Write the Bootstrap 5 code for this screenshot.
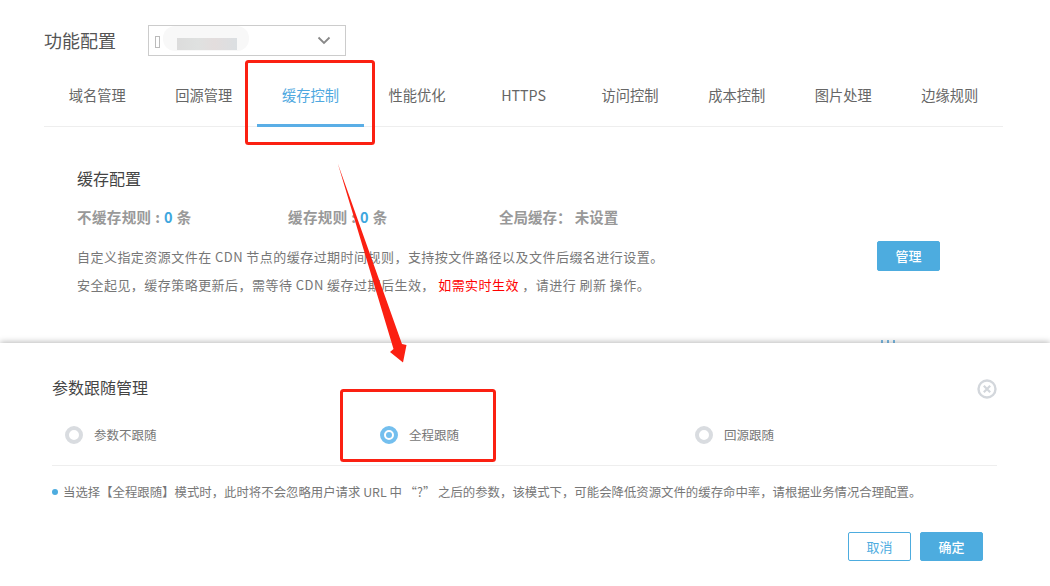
<!DOCTYPE html>
<html lang="zh-CN">
<head>
<meta charset="utf-8">
<title>功能配置</title>
<link href="https://cdn.jsdelivr.net/npm/bootstrap@5.3.0/dist/css/bootstrap.min.css" rel="stylesheet">
<style>
html,body{height:586px;overflow:hidden;background:#fff}
body{font-family:"Noto Sans CJK SC","Liberation Sans",sans-serif;color:#666;font-size:12.5px;position:relative}
.upper-pane{height:343px;padding:25px 47px 0 44px;position:relative;overflow:hidden}
.head-row{height:33px}
.page-title{font-size:18px;color:#555;line-height:31px;width:104px}
.domain-pick{width:198px;height:31px;border:1px solid #ccc;padding:0 14px 0 6px}
.fake-glyph{width:5px;height:12px;border:1px solid #bbb;display:block;margin-top:2px}
.blur-patch{width:86px;height:25px;margin:0 0 0 3px;align-self:flex-start;border-radius:12px;filter:blur(.6px);background:linear-gradient(90deg,#dcdcdc,#dfe1e0 35%,#e3dddd 62%,#dbdfe2) 14px 12px/60px 12px no-repeat,linear-gradient(#f8f8f8,#f8f8f8)}
.tab-strip{margin-top:10px;border-bottom:1px solid #eee;height:59px}
.tab-item{height:59px;line-height:54px;color:#666;font-size:14.25px;padding:0;position:relative;display:block}
.tab-item.is-on{color:#4ea8e0;border-bottom:3px solid #5aaee6}
.sect-body{padding:38px 0 0 33px;width:896px}
.sect-title{font-size:16px;color:#444;line-height:26px}
.stat-row{margin-top:14px;font-size:14.5px;font-weight:700;color:#999;line-height:24px}
.stat-cell{width:211px}
.stat-wide{letter-spacing:.4px}
.num-blue{color:#3fa7de}
.desc-line{font-size:13px;letter-spacing:.46px;color:#777;line-height:28px;white-space:nowrap}
.desc-first{margin-top:14px}
.hot-red{color:#f00}
.btn-sky{background:#4dacdf;border:1px solid #4dacdf;color:#fff;font-size:13px;width:63px;height:30px;padding:0;line-height:28px;border-radius:2px;font-weight:500}
.btn-sky:hover{background:#4dacdf;color:#fff;border-color:#4dacdf}
.btn-line{background:#fff;border:1px solid #4dacdf;color:#4dacdf;font-size:13px;width:63px;height:29px;padding:0;line-height:27px;border-radius:2px}
.btn-short{height:29px;line-height:27px}
.manage-slot{margin-top:-58px}
.peek-bits{position:absolute;left:881px;top:340px;display:flex;gap:4px}
.peek-bits i{display:block;width:2px;height:3px;background:#7cbce6}
.dialog-pane{height:243px;background:#fff;box-shadow:0 -1px 6px rgba(0,0,0,.28);position:relative;padding:30px 53px 0 52px}
.dlg-title{font-size:16px;color:#444;line-height:28px}
.close-x{width:20px;height:20px;display:block;margin-top:6px}
.radio-row{margin-top:23px;border-bottom:1px solid #eee;height:42px;--bs-gutter-x:0}
.radio-cell{padding-left:13px;height:22px;font-size:12.5px;color:#777;line-height:22px}
.radio-dot{width:18px;height:18px;border-radius:50%;border:4px solid #d9dce0;background:#fff;margin-right:11px;flex:none}
.radio-dot.is-on{border-color:#74bfee;position:relative}
.radio-dot.is-on::after{content:"";position:absolute;left:2px;top:2px;width:6px;height:6px;border-radius:50%;background:#74bfee}
.note-row{margin-top:15px;line-height:22px;font-size:12.4px;color:#777;white-space:nowrap}
.note-dot{width:6px;height:6px;border-radius:50%;background:#4dacdf;margin-right:5px;flex:none}
.foot-row{margin-top:29px;padding-right:14px;gap:9px}
.mark-layer{position:absolute;left:0;top:0;width:1050px;height:586px;pointer-events:none}
</style>
</head>
<body>
<div class="upper-pane">
  <div class="d-flex align-items-start head-row">
    <div class="page-title">功能配置</div>
    <div class="domain-pick d-flex align-items-center">
      <span class="fake-glyph"></span>
      <span class="blur-patch"></span>
      <svg class="ms-auto" width="14" height="9" viewBox="0 0 14 9"><path d="M1.5 1.5 7 7l5.5-5.5" fill="none" stroke="#888" stroke-width="1.8"/></svg>
    </div>
  </div>
  <div class="nav nav-justified tab-strip">
    <a class="nav-link tab-item">域名管理</a>
    <a class="nav-link tab-item">回源管理</a>
    <a class="nav-link tab-item is-on">缓存控制</a>
    <a class="nav-link tab-item">性能优化</a>
    <a class="nav-link tab-item">HTTPS</a>
    <a class="nav-link tab-item">访问控制</a>
    <a class="nav-link tab-item">成本控制</a>
    <a class="nav-link tab-item">图片处理</a>
    <a class="nav-link tab-item">边缘规则</a>
  </div>
  <div class="sect-body">
    <div class="sect-title">缓存配置</div>
    <div class="d-flex stat-row">
      <div class="stat-cell stat-wide">不缓存规则 : <span class="num-blue">0</span> 条</div>
      <div class="stat-cell stat-wide">缓存规则 : <span class="num-blue">0</span> 条</div>
      <div class="stat-cell">全局缓存： 未设置</div>
    </div>
    <div class="desc-line desc-first">自定义指定资源文件在 CDN 节点的缓存过期时间规则，支持按文件路径以及文件后缀名进行设置。</div>
    <div class="desc-line">安全起见，缓存策略更新后，需等待 CDN 缓存过期后生效， <span class="hot-red">如需实时生效</span> ，请进行 刷新 操作。</div>
    <div class="d-flex justify-content-end manage-slot"><button class="btn btn-sky" type="button">管理</button></div>
  </div>
  <div class="peek-bits"><i></i><i></i><i></i></div>
</div>
<div class="dialog-pane">
  <div class="d-flex justify-content-between align-items-start">
    <div class="dlg-title">参数跟随管理</div>
    <svg class="close-x" viewBox="0 0 20 20"><circle cx="10" cy="10" r="8.5" fill="none" stroke="#d3d7dc" stroke-width="2.4"/><path d="M6.8 6.8l6.4 6.4M13.2 6.8l-6.4 6.4" stroke="#d3d7dc" stroke-width="2.2"/></svg>
  </div>
  <div class="row radio-row">
    <div class="col-4"><div class="d-flex align-items-center radio-cell"><span class="radio-dot"></span>参数不跟随</div></div>
    <div class="col-4"><div class="d-flex align-items-center radio-cell"><span class="radio-dot is-on"></span>全程跟随</div></div>
    <div class="col-4"><div class="d-flex align-items-center radio-cell"><span class="radio-dot"></span>回源跟随</div></div>
  </div>
  <div class="d-flex align-items-center note-row"><span class="note-dot"></span>当选择【全程跟随】模式时，此时将不会忽略用户请求 URL 中 “?” 之后的参数，该模式下，可能会降低资源文件的缓存命中率，请根据业务情况合理配置。</div>
  <div class="d-flex justify-content-end foot-row">
    <button class="btn btn-line" type="button">取消</button>
    <button class="btn btn-sky btn-short" type="button">确定</button>
  </div>
</div>
<svg class="mark-layer" viewBox="0 0 1050 586">
  <rect x="246.5" y="61.5" width="127" height="82" rx="2" fill="none" stroke="#fb2012" stroke-width="3"/>
  <rect x="341.5" y="390.5" width="153" height="70" rx="2" fill="none" stroke="#fb2012" stroke-width="3"/>
  <polygon points="337.7,163.3 402,344 406.5,345 403,362.5 390,352 393.5,349" fill="#fb2012"/>
</svg>
</body>
</html>
